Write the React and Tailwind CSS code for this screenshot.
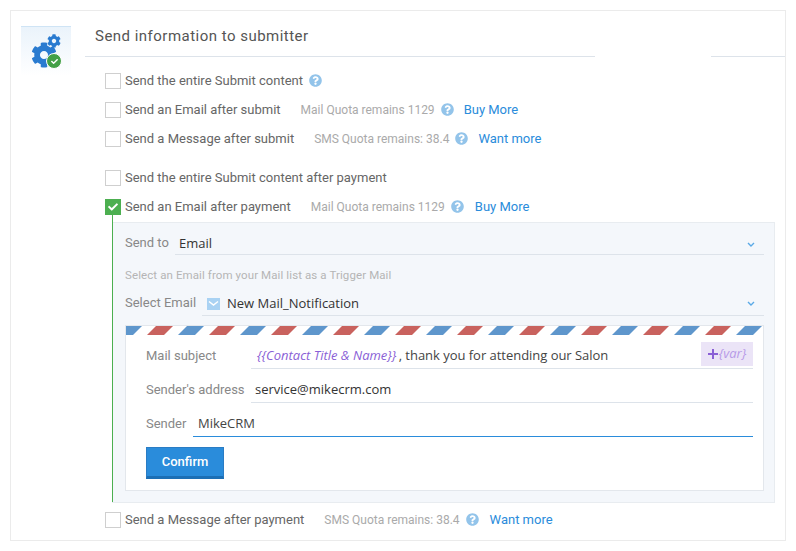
import { FaCog, FaCheck, FaQuestionCircle } from "react-icons/fa";

const roboto = "font-['Roboto',sans-serif]";
const openSans = "font-['Open_Sans',sans-serif]";

function Checkbox({ checked }) {
  if (checked) {
    return (
      <span className="w-4 h-4 bg-[#4caf50] flex items-center justify-center shrink-0">
        <FaCheck className="text-white w-[10px] h-[10px]" />
      </span>
    );
  }
  return <span className="w-4 h-4 bg-white border border-[#cfcfcf] shrink-0" />;
}

function Help() {
  return <FaQuestionCircle className="text-[#93c4ea] w-[13px] h-[13px] shrink-0" />;
}

function OptionRow({ label, checked, quota, quotaGap, link, linkGap, help, className }) {
  return (
    <div className={`flex items-center h-[29px] ${className || ""}`}>
      <Checkbox checked={checked} />
      <span className="ml-1 text-[13px] text-[#666]">{label}</span>
      {quota && <span className={`text-[12px] text-[#aaa] ${quotaGap}`}>{quota}</span>}
      {help && (
        <span className="ml-[6px]">
          <Help />
        </span>
      )}
      {link && <span className={`text-[13px] text-[#2a8cdb] ${linkGap}`}>{link}</span>}
    </div>
  );
}

function Chevron() {
  return (
    <svg width="8" height="5" viewBox="0 0 8 5" className="mr-[9px]">
      <path d="M1 1 L4 4 L7 1" stroke="#5aa9e6" strokeWidth="1.4" fill="none" />
    </svg>
  );
}

function FieldRow({ label, width, labelClass, children, className }) {
  return (
    <div className={`flex items-end ${className || ""}`}>
      <span className={`text-[13px] text-[#888] shrink-0 ${labelClass || "pb-[4px]"}`} style={{ width }}>
        {label}
      </span>
      {children}
    </div>
  );
}

function AirmailStripes() {
  return (
    <svg className="block w-full h-[9px]" height="9">
      <defs>
        <pattern id="airmail" x="0" y="0" width="62" height="9" patternUnits="userSpaceOnUse">
          <polygon points="-10,9 -1,0 16,0 7,9" fill="#5e96cc" />
          <polygon points="52,9 61,0 78,0 69,9" fill="#5e96cc" />
          <polygon points="21,9 30,0 47,0 38,9" fill="#c9625e" />
        </pattern>
      </defs>
      <rect width="100%" height="9" fill="url(#airmail)" />
    </svg>
  );
}

export default function App() {
  return (
    <div className={`w-[796px] h-[551px] bg-white pt-[10px] pl-[10px] pr-[10px] ${roboto}`}>
      <div className="w-[776px] h-[531px] border border-[#ebebeb] flex">
        {/* left icon */}
        <div className="w-[74px] shrink-0 pl-[10px] pt-[15px]">
          <div className="relative w-[50px] h-[50px] border-t border-[#cfe4f5] bg-gradient-to-b from-[#eaf3fb] to-white">
            <FaCog className="absolute left-[10px] top-[15px] w-[26px] h-[26px] text-[#2a7bd0]" />
            <FaCog className="absolute left-[26px] top-[7px] w-[14px] h-[14px] text-[#2a7bd0]" />
            <span className="absolute left-[25px] top-[26px] w-[16px] h-[16px] rounded-full bg-[#43a047] border border-white flex items-center justify-center">
              <FaCheck className="text-white w-[7px] h-[7px]" />
            </span>
          </div>
        </div>

        {/* right column */}
        <div className="flex-1 min-w-0">
          <div className="h-[46px] flex">
            <div className="w-[510px] border-b border-[#dde3ea] pl-[10px] pt-[15px] text-[15px] leading-5 text-[#555] tracking-[0.48px]">
              Send information to submitter
            </div>
            <div className="w-[116px]" />
            <div className="flex-1 border-b border-[#dde3ea]" />
          </div>

          <div className="pl-[20px] pr-[10px] pt-[9px]">
            <OptionRow label="Send the entire Submit content" help />
            <OptionRow label="Send an Email after submit" quota="Mail Quota remains 1129" quotaGap="ml-[20px]" help link="Buy More" linkGap="ml-[10px]" />
            <OptionRow label="Send a Message after submit" quota="SMS Quota remains: 38.4" quotaGap="ml-[20px]" help link="Want more" linkGap="ml-[10px]" />
            <OptionRow label="Send the entire Submit content after payment" className="mt-[10px]" />
            <OptionRow label="Send an Email after payment" checked quota="Mail Quota remains 1129" quotaGap="ml-[20px]" help link="Buy More" linkGap="ml-[11px]" />

            {/* expanded panel */}
            <div className="relative ml-[7px] mt-[1px] h-[281px] bg-[#f4f7fb] border-t border-r border-b border-[#e8ecf0] pl-[13px] pr-[10px] pt-[8px]">
              <span className="absolute left-0 top-[-8px] bottom-0 w-[1px] bg-[#4caf50]" />
              <FieldRow label="Send to" width={50} labelClass="pb-[3px]">
                <div className={`flex-1 h-[24px] border-b border-[#dde3ea] flex items-center justify-between pl-[4px] pt-[3px] text-[13px] text-[#333] ${openSans}`}>
                  Email
                  <Chevron />
                </div>
              </FieldRow>
              <div className="mt-[12px] text-[11.5px] leading-4 text-[#b5b5b5] tracking-[0.1px]">
                Select an Email from your Mail list as a Trigger Mail
              </div>
              <FieldRow label="Select Email" width={77} className="mt-[9px]">
                <div className={`flex-1 h-[24px] border-b border-[#dde3ea] flex items-center justify-between pl-[5px] text-[13px] text-[#333] ${openSans}`}>
                  <span className="flex items-center">
                    <svg width="13" height="12" viewBox="0 0 13 12" className="mr-[7px]">
                      <rect width="13" height="12" fill="#a9d2f3" />
                      <path d="M2 3.5 L6.5 7 L11 3.5" stroke="#fff" strokeWidth="1.4" fill="none" />
                    </svg>
                    New Mail_Notification
                  </span>
                  <Chevron />
                </div>
              </FieldRow>

              {/* mail card */}
              <div className="mt-[9px] h-[166px] bg-white border border-[#e3e7ec]">
                <AirmailStripes />
                <div className="pl-[20px] pr-[10px]">
                  <FieldRow label="Mail subject" width={105} className="mt-[8px]">
                    <div className={`relative flex-1 h-[26px] border-b border-[#dde3ea] flex items-center text-[13px] text-[#444] ${openSans}`}>
                      <span className="pl-[6px] italic text-[#8a5fd6]">{"{{Contact Title & Name}}"}</span>
                      <span className="ml-[-1px] tracking-[-0.03px]">&nbsp;, thank you for attending our Salon</span>
                      <span className="absolute right-0 top-[-1px] w-[52px] h-[24px] bg-[#ebe4f7] flex items-center justify-center text-[#b79be8] italic text-[13px]">
                        <svg width="10" height="10" viewBox="0 0 10 10" className="mr-[1px]">
                          <path d="M5 0 V10 M0 5 H10" stroke="#8a5fd6" strokeWidth="2" />
                        </svg>
                        {"{var}"}
                      </span>
                    </div>
                  </FieldRow>
                  <FieldRow label="Sender's address" width={105} className="mt-[8px]">
                    <div className={`flex-1 h-[26px] border-b border-[#dde3ea] flex items-center pl-[4px] text-[13px] text-[#333] ${openSans}`}>
                      service@mikecrm.com
                    </div>
                  </FieldRow>
                  <FieldRow label="Sender" width={47} className="mt-[8px]">
                    <div className={`flex-1 h-[26px] border-b border-[#2a8cdb] flex items-center pl-[5px] text-[13px] text-[#444] ${openSans}`}>
                      MikeCRM
                    </div>
                  </FieldRow>
                  <button className="mt-[10px] w-[78px] h-[32px] bg-[#2a8cdb] border border-[#2a7cc4] border-b-[3px] border-b-[#1c6fb5] text-white text-[13px] font-medium">
                    Confirm
                  </button>
                </div>
              </div>
            </div>

            <OptionRow label="Send a Message after payment" quota="SMS Quota remains: 38.4" quotaGap="ml-[20px]" help link="Want more" linkGap="ml-[11px]" className="mt-[2px]" />
          </div>
        </div>
      </div>
    </div>
  );
}
